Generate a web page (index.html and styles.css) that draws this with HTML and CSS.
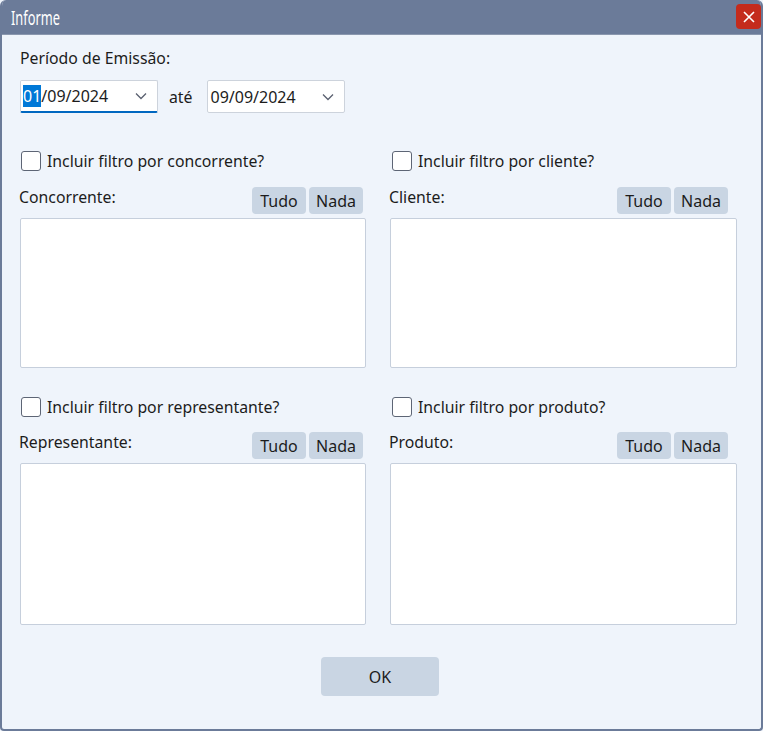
FILE: index.html
```html
<!DOCTYPE html>
<html lang="pt">
<head>
<meta charset="utf-8">
<title>Informe</title>
<link rel="stylesheet" href="styles.css">
</head>
<body>
<div class="window">
  <div class="titlebar">
    <span class="title">Informe</span>
    <span class="close"><svg width="14" height="14" viewBox="0 0 14 14"><path d="M2 2 L12 12 M12 2 L2 12" stroke="#fff" stroke-width="1.6" fill="none"/></svg></span>
  </div>
  <div class="content">
    <div class="label">Período de Emissão:</div>
    <div class="date-row">
      <div class="combo focused"><span class="txt"><span class="sel">01</span>/09/2024</span><svg class="chev" width="12" height="8" viewBox="0 0 12 8"><path d="M1 1.5 L6 6.5 L11 1.5" stroke="#5a6070" stroke-width="1.3" fill="none"/></svg></div>
      <span class="ate">até</span>
      <div class="combo"><span class="txt">09/09/2024</span><svg class="chev" width="12" height="8" viewBox="0 0 12 8"><path d="M1 1.5 L6 6.5 L11 1.5" stroke="#5a6070" stroke-width="1.3" fill="none"/></svg></div>
    </div>
    <div class="grid">
      <div class="section top">
        <label class="check"><span class="box"></span>Incluir filtro por concorrente?</label>
        <div class="head"><span class="hlabel">Concorrente:</span><div class="btns"><span class="btn">Tudo</span><span class="btn">Nada</span></div></div>
        <div class="list short"></div>
      </div>
      <div class="section top right">
        <label class="check"><span class="box"></span>Incluir filtro por cliente?</label>
        <div class="head"><span class="hlabel">Cliente:</span><div class="btns"><span class="btn">Tudo</span><span class="btn">Nada</span></div></div>
        <div class="list short"></div>
      </div>
      <div class="section bottom">
        <label class="check"><span class="box"></span>Incluir filtro por representante?</label>
        <div class="head"><span class="hlabel">Representante:</span><div class="btns"><span class="btn">Tudo</span><span class="btn">Nada</span></div></div>
        <div class="list tall"></div>
      </div>
      <div class="section bottom right">
        <label class="check"><span class="box"></span>Incluir filtro por produto?</label>
        <div class="head"><span class="hlabel">Produto:</span><div class="btns"><span class="btn">Tudo</span><span class="btn">Nada</span></div></div>
        <div class="list tall"></div>
      </div>
    </div>
    <div class="footer"><span class="ok">OK</span></div>
  </div>
</div>
</body>
</html>
```

FILE: styles.css
```css
html, body {
  margin: 0;
  padding: 0;
  background: #eff4fb;
}
.window {
  width: 763px;
  height: 731px;
  box-sizing: border-box;
  border: 2px solid #6b7b99;
  border-top: none;
  border-radius: 6px 6px 4px 4px;
  background: #eff4fb;
  font-family: "Noto Sans", "Open Sans", sans-serif;
  font-size: 15.8px;
  color: #1c1c1c;
  overflow: hidden;
}
.titlebar {
  height: 35px;
  background: #6b7b99;
  display: flex;
  align-items: center;
  justify-content: space-between;
  padding: 0 2px 0 11px;
  margin: 0 -2px;
  border-bottom: 1px solid #8a97ae;
  box-sizing: border-box;
}
.title {
  color: #fff;
  font-size: 20px;
  display: inline-block;
  transform: scaleX(0.64);
  transform-origin: left center;
}
.close {
  width: 25px;
  height: 25px;
  background: #c42b1c;
  border-radius: 4px;
  display: flex;
  align-items: center;
  justify-content: center;
  margin-top: -1px;
}
.content {
  padding: 13px 0 0 17px;
}
.label {
  line-height: 20px;
  margin-left: 1px;
}
.date-row {
  display: flex;
  align-items: center;
  margin-top: 12px;
  height: 33px;
}
.combo {
  width: 138px;
  height: 33px;
  box-sizing: border-box;
  background: #fff;
  border: 1px solid #cdd3dc;
  border-radius: 2px;
  display: flex;
  align-items: center;
  justify-content: space-between;
  padding: 0 10px 0 2px;
  margin-left: 1px;
  font-size: 16px;
}
.combo.focused {
  border-bottom: 2px solid #0067c0;
}
.sel {
  background: #0078d7;
  color: #fff;
}
.ate {
  margin: 0 14px 0 11px;
}
.grid {
  display: grid;
  grid-template-columns: 346px 347px;
  column-gap: 24px;
  margin-left: 1px;
}
.section.top {
  margin-top: 38px;
}
.section.bottom {
  margin-top: 29px;
}
.check {
  display: flex;
  align-items: center;
  height: 20px;
  gap: 6px;
  margin-left: 1px;
}
.section.right .check {
  margin-left: 2px;
}
.box {
  width: 20px;
  height: 20px;
  border: 1px solid #5d6575;
  border-radius: 3px;
  background: #fff;
  box-sizing: border-box;
}
.head {
  display: flex;
  justify-content: space-between;
  align-items: flex-start;
  height: 30px;
  margin-top: 13px;
  margin-left: -1px;
}
.section.bottom .head {
  margin-top: 12px;
}
.hlabel {
  line-height: 26px;
}
.btns {
  display: flex;
  gap: 3px;
  margin-right: 3px;
  margin-top: 3px;
}
.section.right .btns {
  margin-right: 9px;
}
.btn {
  width: 54px;
  height: 27px;
  box-sizing: border-box;
  background: #c9d5e3;
  border-radius: 4px;
  display: flex;
  align-items: center;
  justify-content: center;
  font-size: 16px;
}
.list {
  margin-top: 4px;
  background: #fff;
  border: 1px solid #c6cfdc;
  border-radius: 2px;
  box-sizing: border-box;
}
.list.short { height: 150px; }
.list.tall { height: 162px; }
.footer {
  display: flex;
  justify-content: center;
  margin-top: 32px;
  padding-right: 20px;
}
.ok {
  width: 118px;
  height: 39px;
  background: #c9d5e3;
  border-radius: 4px;
  display: flex;
  align-items: center;
  justify-content: center;
  font-size: 16px;
}
```
